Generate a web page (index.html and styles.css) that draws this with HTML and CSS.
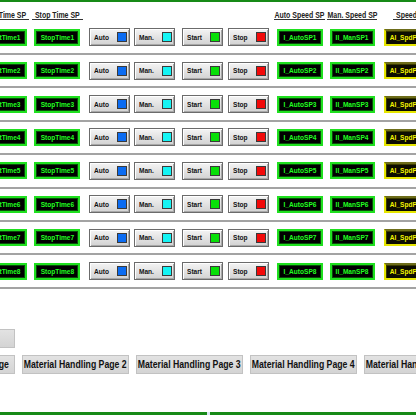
FILE: index.html
```html
<!DOCTYPE html>
<html>
<head>
    <title>Material Handling - Timers</title>
    <link rel="stylesheet" href="styles.css">
</head>
<body>
    <div class="screen">
        <div class="header">
            <div class="hd hd-start"><span class="t">Start Time SP</span></div>
            <div class="hd hd-stop"><span class="t">Stop Time SP</span></div>
            <div class="hd hd-auto"><span class="t">Auto Speed SP</span></div>
            <div class="hd hd-man"><span class="t">Man. Speed SP</span></div>
            <div class="hd hd-pv"><span class="t">Speed PV</span></div>
        </div>

        <div class="row">
            <div class="box tb first"><span class="t">StartTime1</span></div>
            <div class="box tb stop-t"><span class="t">StopTime1</span></div>
            <div class="btn b-auto"><span class="t">Auto</span><span class="sq blue"></span></div>
            <div class="btn b-man"><span class="t">Man.</span><span class="sq cyan"></span></div>
            <div class="btn b-start"><span class="t">Start</span><span class="sq green"></span></div>
            <div class="btn b-stop"><span class="t">Stop</span><span class="sq red"></span></div>
            <div class="box sp sp-auto"><span class="t">I_AutoSP1</span></div>
            <div class="box sp sp-man"><span class="t">II_ManSP1</span></div>
            <div class="box pv"><span class="t">AI_SpdPV1</span></div>
        </div>
        <div class="row">
            <div class="box tb first"><span class="t">StartTime2</span></div>
            <div class="box tb stop-t"><span class="t">StopTime2</span></div>
            <div class="btn b-auto"><span class="t">Auto</span><span class="sq blue"></span></div>
            <div class="btn b-man"><span class="t">Man.</span><span class="sq cyan"></span></div>
            <div class="btn b-start"><span class="t">Start</span><span class="sq green"></span></div>
            <div class="btn b-stop"><span class="t">Stop</span><span class="sq red"></span></div>
            <div class="box sp sp-auto"><span class="t">I_AutoSP2</span></div>
            <div class="box sp sp-man"><span class="t">II_ManSP2</span></div>
            <div class="box pv"><span class="t">AI_SpdPV2</span></div>
        </div>
        <div class="row">
            <div class="box tb first"><span class="t">StartTime3</span></div>
            <div class="box tb stop-t"><span class="t">StopTime3</span></div>
            <div class="btn b-auto"><span class="t">Auto</span><span class="sq blue"></span></div>
            <div class="btn b-man"><span class="t">Man.</span><span class="sq cyan"></span></div>
            <div class="btn b-start"><span class="t">Start</span><span class="sq green"></span></div>
            <div class="btn b-stop"><span class="t">Stop</span><span class="sq red"></span></div>
            <div class="box sp sp-auto"><span class="t">I_AutoSP3</span></div>
            <div class="box sp sp-man"><span class="t">II_ManSP3</span></div>
            <div class="box pv"><span class="t">AI_SpdPV3</span></div>
        </div>
        <div class="row">
            <div class="box tb first"><span class="t">StartTime4</span></div>
            <div class="box tb stop-t"><span class="t">StopTime4</span></div>
            <div class="btn b-auto"><span class="t">Auto</span><span class="sq blue"></span></div>
            <div class="btn b-man"><span class="t">Man.</span><span class="sq cyan"></span></div>
            <div class="btn b-start"><span class="t">Start</span><span class="sq green"></span></div>
            <div class="btn b-stop"><span class="t">Stop</span><span class="sq red"></span></div>
            <div class="box sp sp-auto"><span class="t">I_AutoSP4</span></div>
            <div class="box sp sp-man"><span class="t">II_ManSP4</span></div>
            <div class="box pv"><span class="t">AI_SpdPV4</span></div>
        </div>
        <div class="row">
            <div class="box tb first"><span class="t">StartTime5</span></div>
            <div class="box tb stop-t"><span class="t">StopTime5</span></div>
            <div class="btn b-auto"><span class="t">Auto</span><span class="sq blue"></span></div>
            <div class="btn b-man"><span class="t">Man.</span><span class="sq cyan"></span></div>
            <div class="btn b-start"><span class="t">Start</span><span class="sq green"></span></div>
            <div class="btn b-stop"><span class="t">Stop</span><span class="sq red"></span></div>
            <div class="box sp sp-auto"><span class="t">I_AutoSP5</span></div>
            <div class="box sp sp-man"><span class="t">II_ManSP5</span></div>
            <div class="box pv"><span class="t">AI_SpdPV5</span></div>
        </div>
        <div class="row">
            <div class="box tb first"><span class="t">StartTime6</span></div>
            <div class="box tb stop-t"><span class="t">StopTime6</span></div>
            <div class="btn b-auto"><span class="t">Auto</span><span class="sq blue"></span></div>
            <div class="btn b-man"><span class="t">Man.</span><span class="sq cyan"></span></div>
            <div class="btn b-start"><span class="t">Start</span><span class="sq green"></span></div>
            <div class="btn b-stop"><span class="t">Stop</span><span class="sq red"></span></div>
            <div class="box sp sp-auto"><span class="t">I_AutoSP6</span></div>
            <div class="box sp sp-man"><span class="t">II_ManSP6</span></div>
            <div class="box pv"><span class="t">AI_SpdPV6</span></div>
        </div>
        <div class="row">
            <div class="box tb first"><span class="t">StartTime7</span></div>
            <div class="box tb stop-t"><span class="t">StopTime7</span></div>
            <div class="btn b-auto"><span class="t">Auto</span><span class="sq blue"></span></div>
            <div class="btn b-man"><span class="t">Man.</span><span class="sq cyan"></span></div>
            <div class="btn b-start"><span class="t">Start</span><span class="sq green"></span></div>
            <div class="btn b-stop"><span class="t">Stop</span><span class="sq red"></span></div>
            <div class="box sp sp-auto"><span class="t">I_AutoSP7</span></div>
            <div class="box sp sp-man"><span class="t">II_ManSP7</span></div>
            <div class="box pv"><span class="t">AI_SpdPV7</span></div>
        </div>
        <div class="row">
            <div class="box tb first"><span class="t">StartTime8</span></div>
            <div class="box tb stop-t"><span class="t">StopTime8</span></div>
            <div class="btn b-auto"><span class="t">Auto</span><span class="sq blue"></span></div>
            <div class="btn b-man"><span class="t">Man.</span><span class="sq cyan"></span></div>
            <div class="btn b-start"><span class="t">Start</span><span class="sq green"></span></div>
            <div class="btn b-stop"><span class="t">Stop</span><span class="sq red"></span></div>
            <div class="box sp sp-auto"><span class="t">I_AutoSP8</span></div>
            <div class="box sp sp-man"><span class="t">II_ManSP8</span></div>
            <div class="box pv"><span class="t">AI_SpdPV8</span></div>
        </div>

        <div class="nav">
            <div class="nav-row">
                <div class="nav-btn"></div>
            </div>
            <div class="nav-row">
                <div class="nav-btn"><span class="t">Material Handling Page</span></div>
                <div class="nav-btn"><span class="t">Material Handling Page 2</span></div>
                <div class="nav-btn"><span class="t">Material Handling Page 3</span></div>
                <div class="nav-btn"><span class="t">Material Handling Page 4</span></div>
                <div class="nav-btn"><span class="t">Material Handling Page 5</span></div>
            </div>
        </div>

        <div class="footer"><span class="mark"></span></div>
    </div>
</body>
</html>
```

FILE: styles.css
```css
html, body {
    margin: 0;
    padding: 0;
    overflow: hidden;
    background-color: white;
}
body {
    font-family: "Liberation Sans", Arial, sans-serif;
    font-weight: bold;
    color: #111;
}
.screen {
    width: 416px;
    height: 416px;
    display: flex;
    flex-direction: column;
}
/* the HMI font is a narrow one, squeeze the glyphs */
.t {
    display: inline-block;
    white-space: nowrap;
    transform: scaleX(0.82);
}

/* header */
.header {
    height: 21.6px;
    box-sizing: border-box;
    border-top: 2px solid #178a17;
    display: flex;
    flex-shrink: 0;
}
.hd {
    flex-shrink: 0;
    height: 18px;
    box-sizing: border-box;
    padding-top: 9px;
    display: flex;
    justify-content: center;
    line-height: 8px;
    font-size: 8.5px;
    border-bottom: 1px solid #333;
    color: #222;
}
.hd-start { margin-left: -22px; width: 51px; }
.hd-stop { margin-left: 3px; width: 51px; }
.hd-auto { margin-left: 191px; width: 51px; }
.hd-man { margin-left: 2px; width: 50px; }
.hd-pv {
    margin-left: 16px;
    width: 60px;
    justify-content: flex-start;
    padding-left: 3px;
}
.hd-pv .t { transform-origin: left center; }

/* rows */
.row {
    height: 33.4px;
    box-sizing: border-box;
    border-bottom: 2px solid #a3a3a3;
    display: flex;
    align-items: center;
    flex-shrink: 0;
}
.box {
    flex-shrink: 0;
    height: 17px;
    box-sizing: border-box;
    display: flex;
    justify-content: center;
    line-height: 13px;
    font-size: 8px;
    overflow: hidden;
}
.tb, .sp {
    width: 46px;
    background-color: #000;
    color: #22ff22;
    border: 2px solid #1fe01f;
    box-shadow: inset 1px 1px 0 #0b4a0b, inset -1px -1px 0 #0b4a0b;
}
.first { margin-left: -19px; }
.stop-t { margin-left: 7px; }
.sp-auto { margin-left: 8px; }
.sp-man { margin-left: 7px; width: 45px; }
.pv {
    margin-left: 9px;
    width: 46px;
    background-color: #0d0d00;
    color: #f5f500;
    border: 2px solid #e6e600;
    border-top-color: #6d6d1a;
    border-right-color: #6d6d1a;
    box-shadow: inset 1px 1px 0 #3a3a00;
}

.btn {
    flex-shrink: 0;
    width: 41px;
    height: 18px;
    box-sizing: border-box;
    padding: 0 2px 0 4px;
    display: flex;
    align-items: center;
    justify-content: space-between;
    font-size: 8px;
    color: #111;
    background: linear-gradient(#f4f4f4, #d2d2d2);
    border: 1px solid #6b6b6b;
    box-shadow: inset 1px 1px 0 #ffffff, inset -1px -1px 0 #a8a8a8;
}
.btn .t { transform-origin: left center; }
.b-auto { margin-left: 9px; }
.b-man { margin-left: 4px; }
.b-start { margin-left: 7px; }
.b-stop { margin-left: 5px; }
.sq {
    width: 10px;
    height: 10px;
    box-sizing: border-box;
    border: 1px solid #3a3a3a;
}
.blue { background-color: #0b6cf2; }
.cyan { background-color: #14f4f4; }
.green { background-color: #08e008; }
.red { background-color: #f20a0a; }

/* navigation */
.nav {
    padding-top: 40px;
    display: flex;
    flex-direction: column;
    gap: 7px;
}
.nav-row {
    display: flex;
    gap: 7px;
}
.nav-btn {
    flex-shrink: 0;
    width: 107px;
    height: 19px;
    box-sizing: border-box;
    display: flex;
    justify-content: center;
    line-height: 17px;
    font-size: 10px;
    color: #111;
    background: linear-gradient(#e2e2e2, #d4d4d4);
    border: 1px solid #c2c2c2;
}
.nav-btn .t { transform: scaleX(0.87); }
.nav-row .nav-btn:first-child { margin-left: -92px; }

.footer {
    margin-top: auto;
    margin-bottom: 1px;
    height: 3px;
    background-color: #178a17;
    display: flex;
    justify-content: center;
    flex-shrink: 0;
}
.mark {
    width: 3px;
    height: 3px;
    margin-left: 1px;
    background-color: #dbe8f4;
}
```
